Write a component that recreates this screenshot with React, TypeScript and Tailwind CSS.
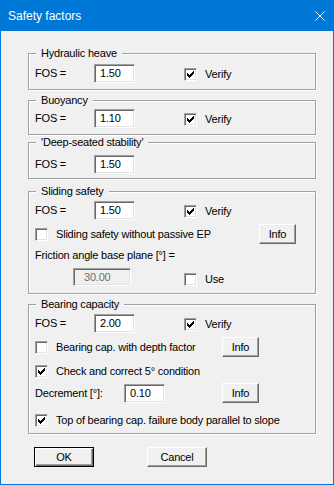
import React from "react";

const MARK = ["......#", ".....##", "#...###", "##.###.", "#####..", ".###...", "..#...."];

function CheckMark() {
  const rects: React.ReactNode[] = [];
  MARK.forEach((row, y) =>
    row.split("").forEach((c, x) => {
      if (c === "#") rects.push(<rect key={`${x}-${y}`} x={x} y={y} width={1} height={1} fill="#000" />);
    })
  );
  return (
    <svg width="7" height="7" viewBox="0 0 7 7" shapeRendering="crispEdges">
      {rects}
    </svg>
  );
}

function Check({ checked }: { checked?: boolean }) {
  return (
    <span className="w-[13px] h-[13px] shrink-0 bg-white border border-t-[#a0a0a0] border-l-[#a0a0a0] border-r-white border-b-white shadow-[inset_1px_1px_0_#696969,inset_-1px_-1px_0_#e3e3e3] flex items-center justify-center">
      {checked && <CheckMark />}
    </span>
  );
}

function CheckLabel({ checked, label, cls = "" }: { checked?: boolean; label: string; cls?: string }) {
  return (
    <div className={`flex items-center gap-[8px] ${cls}`}>
      <Check checked={checked} />
      <span className="whitespace-nowrap">{label}</span>
    </div>
  );
}

function Field({ value, cls, disabled }: { value: string; cls: string; disabled?: boolean }) {
  return (
    <div
      className={`shrink-0 flex items-center border border-t-[#a0a0a0] border-l-[#a0a0a0] border-r-white border-b-white shadow-[inset_1px_1px_0_#696969,inset_-1px_-1px_0_#e3e3e3] ${
        disabled ? "bg-[#f0f0f0] text-[#6d6d6d]" : "bg-white text-black"
      } ${cls}`}
    >
      {value}
    </div>
  );
}

function Btn({ children, cls = "", isDefault }: { children: React.ReactNode; cls?: string; isDefault?: boolean }) {
  return (
    <button
      className={`shrink-0 h-[20px] flex items-center justify-center bg-[#f0f0f0] text-black ${
        isDefault
          ? "border border-black shadow-[inset_1px_1px_0_#fff,inset_-1px_-1px_0_#696969,inset_-2px_-2px_0_#a0a0a0]"
          : "border border-t-white border-l-white border-r-[#696969] border-b-[#696969] shadow-[inset_-1px_-1px_0_#a0a0a0]"
      } ${cls}`}
    >
      {children}
    </button>
  );
}

function Group({ title, cls, children }: { title: string; cls: string; children: React.ReactNode }) {
  return (
    <div
      className={`w-[288px] shrink-0 border border-[#a0a0a0] shadow-[inset_1px_1px_0_#fff,1px_1px_0_#fff] flex flex-col pl-[6px] ${cls}`}
    >
      <span className="-mt-[7px] ml-[1px] px-[5px] self-start bg-[#f0f0f0] h-[13px] leading-[13px] whitespace-nowrap">
        {title}
      </span>
      {children}
    </div>
  );
}

function FosRow({ value, verify, cls }: { value: string; verify?: boolean; cls: string }) {
  return (
    <div className={`flex items-center h-[19px] ${cls}`}>
      <span className="w-[59px] shrink-0">FOS =</span>
      <Field value={value} cls="w-[41px] h-[19px] pl-[5px]" />
      {verify && <CheckLabel checked label="Verify" cls="ml-[49px] mt-[2px]" />}
    </div>
  );
}

export default function App() {
  return (
    <div className="w-[334px] h-[485px] bg-[#0078d7] flex flex-col px-[1px] pb-[1px] font-['Liberation_Sans',Arial,sans-serif]">
      <div className="h-[31px] shrink-0 flex items-center justify-between pl-[8px] pr-[9px] -mx-[1px] text-white text-[12px]">
        <span>Safety factors</span>
        <svg width="10" height="10" viewBox="0 0 10 10">
          <path d="M0.5 0.5 L9.5 9.5 M9.5 0.5 L0.5 9.5" stroke="#fff" strokeWidth="1" />
        </svg>
      </div>
      <div className="flex-1 bg-[#f0f0f0] flex flex-col pl-[27px] text-[11px] leading-[13px] tracking-[-0.2px] text-black">
        <Group title="Hydraulic heave" cls="mt-[22px] h-[37px]">
          <FosRow value="1.50" verify cls="mt-[4px]" />
        </Group>

        <Group title="Buoyancy" cls="mt-[10px] h-[35px]">
          <FosRow value="1.10" verify cls="mt-[2px]" />
        </Group>

        <Group title="'Deep-seated stability'" cls="mt-[7px] h-[37px]">
          <FosRow value="1.50" cls="mt-[6px]" />
        </Group>

        <Group title="Sliding safety" cls="mt-[12px] h-[103px]">
          <FosRow value="1.50" verify cls="mt-[3px]" />
          <div className="mt-[4px] h-[20px] flex items-center">
            <div className="w-[224px] shrink-0">
              <CheckLabel label="Sliding safety without passive EP" />
            </div>
            <Btn cls="w-[37px]">Info</Btn>
          </div>
          <div className="mt-[5px] h-[13px] whitespace-nowrap">Friction angle base plane [°] =</div>
          <div className="mt-[6px] h-[18px] flex items-end">
            <Field value="30.00" disabled cls="ml-[38px] w-[58px] h-[18px] pl-[10px]" />
            <CheckLabel label="Use" cls="ml-[53px]" />
          </div>
        </Group>

        <Group title="Bearing capacity" cls="mt-[10px] h-[130px]">
          <FosRow value="2.00" verify cls="mt-[3px]" />
          <div className="mt-[4px] h-[20px] flex items-center">
            <div className="w-[187px] shrink-0">
              <CheckLabel label="Bearing cap. with depth factor" />
            </div>
            <Btn cls="w-[37px]">Info</Btn>
          </div>
          <div className="mt-[8px] h-[13px] flex items-center">
            <CheckLabel checked label="Check and correct 5° condition" />
          </div>
          <div className="mt-[5px] h-[20px] flex items-center">
            <span className="w-[89px] shrink-0 whitespace-nowrap">Decrement [°]:</span>
            <Field value="0.10" cls="w-[41px] h-[19px] pl-[5px]" />
            <Btn cls="w-[37px] ml-[57px]">Info</Btn>
          </div>
          <div className="mt-[11px] h-[13px] flex items-center">
            <CheckLabel checked label="Top of bearing cap. failure body parallel to slope" />
          </div>
        </Group>

        <div className="mt-[13px] flex">
          <Btn isDefault cls="ml-[6px] w-[60px]">OK</Btn>
          <Btn cls="ml-[53px] w-[60px]">Cancel</Btn>
        </div>
      </div>
    </div>
  );
}
